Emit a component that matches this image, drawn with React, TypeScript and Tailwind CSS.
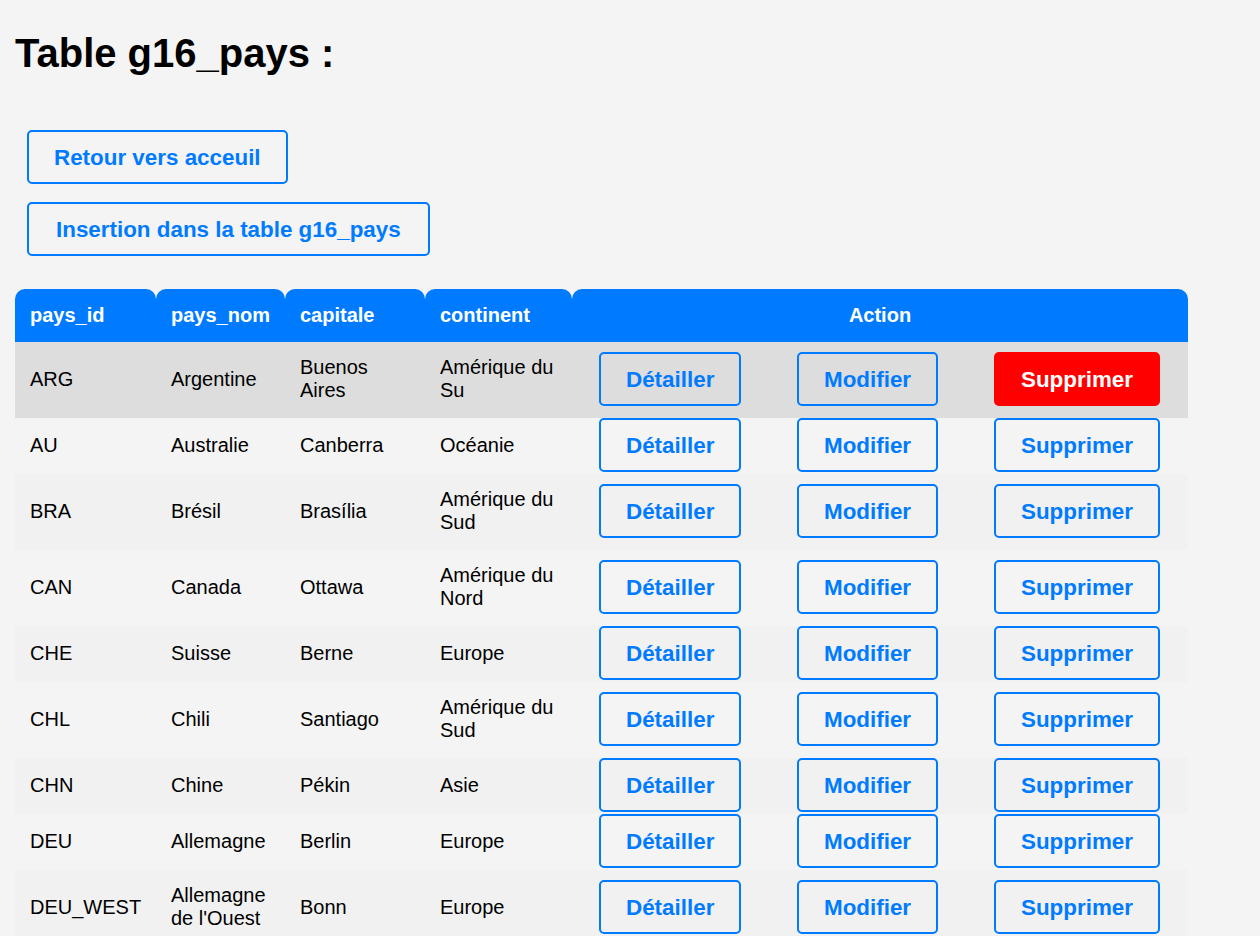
import React from 'react'

const PAYS = [
  { id: 'ARG', nom: 'Argentine', capitale: 'Buenos Aires', continent: 'Amérique du Su' },
  { id: 'AU', nom: 'Australie', capitale: 'Canberra', continent: 'Océanie' },
  { id: 'BRA', nom: 'Brésil', capitale: 'Brasília', continent: 'Amérique du Sud' },
  { id: 'CAN', nom: 'Canada', capitale: 'Ottawa', continent: 'Amérique du Nord' },
  { id: 'CHE', nom: 'Suisse', capitale: 'Berne', continent: 'Europe' },
  { id: 'CHL', nom: 'Chili', capitale: 'Santiago', continent: 'Amérique du Sud' },
  { id: 'CHN', nom: 'Chine', capitale: 'Pékin', continent: 'Asie' },
  { id: 'DEU', nom: 'Allemagne', capitale: 'Berlin', continent: 'Europe' },
  { id: 'DEU_WEST', nom: "Allemagne de l'Ouest", capitale: 'Bonn', continent: 'Europe' },
]

const btn =
  'inline-block h-[54px] px-[25px] border-2 rounded-[5px] text-[22.4px] font-bold leading-[25px] whitespace-nowrap'

const ActionButton = ({ label, danger }: { label: string; danger?: boolean }) => (
  <button
    className={`${btn} mx-3 mt-0 mb-[2px] align-middle ${
      danger
        ? 'bg-[#ff0000] border-[#ff0000] text-white'
        : 'border-[#007bff] text-[#007bff] bg-transparent'
    }`}
  >
    {label}
  </button>
)

export default function App() {
  const hovered = 'ARG'

  return (
    <div className="min-h-screen bg-[#f4f4f4] px-[15px] pb-10 text-black font-['Liberation_Sans',Arial,sans-serif]">
      <h1 className="pt-[30px] text-[40px] font-bold leading-[46px]">Table g16_pays :</h1>

      <div className="mt-[54px] flex flex-col items-start gap-[18px] pl-3">
        <button className={`${btn} border-[#007bff] text-[#007bff]`}>Retour vers acceuil</button>
        <button className={`${btn} px-[27px] border-[#007bff] text-[#007bff]`}>
          Insertion dans la table g16_pays
        </button>
      </div>

      <table className="mt-[33px] w-[1173px] table-fixed border-collapse text-[20px] leading-[23px]">
        <colgroup>
          <col className="w-[141px]" />
          <col className="w-[129px]" />
          <col className="w-[140px]" />
          <col className="w-[147px]" />
          <col className="w-[198px]" />
          <col className="w-[197px]" />
          <col className="w-[221px]" />
        </colgroup>
        <thead>
          <tr className="text-white">
            <th className="bg-[#007bff] rounded-t-[10px] p-[15px] text-left font-bold">pays_id</th>
            <th className="bg-[#007bff] rounded-t-[10px] p-[15px] text-left font-bold">pays_nom</th>
            <th className="bg-[#007bff] rounded-t-[10px] p-[15px] text-left font-bold">capitale</th>
            <th className="bg-[#007bff] rounded-t-[10px] p-[15px] text-left font-bold">continent</th>
            <th colSpan={3} className="bg-[#007bff] rounded-t-[10px] p-[15px] text-center font-bold">
              Action
            </th>
          </tr>
        </thead>
        <tbody>
          {PAYS.map((p, i) => (
            <tr
              key={p.id}
              className={
                p.id === hovered ? 'bg-[#dddddd]' : i % 2 === 0 ? 'bg-[#f1f1f1]' : 'bg-transparent'
              }
            >
              <td className="px-[15px] pt-[14px] pb-[16px] align-middle whitespace-nowrap">{p.id}</td>
              <td className="px-[15px] pt-[14px] pb-[16px] align-middle">{p.nom}</td>
              <td className="px-[15px] pt-[14px] pb-[16px] align-middle">{p.capitale}</td>
              <td className="px-[15px] pt-[14px] pb-[16px] align-middle">{p.continent}</td>
              <td className="px-[15px] py-0 align-middle">
                <ActionButton label="Détailler" />
              </td>
              <td className="px-[15px] py-0 align-middle">
                <ActionButton label="Modifier" />
              </td>
              <td className="px-[15px] py-0 align-middle">
                <ActionButton label="Supprimer" danger={p.id === hovered} />
              </td>
            </tr>
          ))}
        </tbody>
      </table>
    </div>
  )
}
